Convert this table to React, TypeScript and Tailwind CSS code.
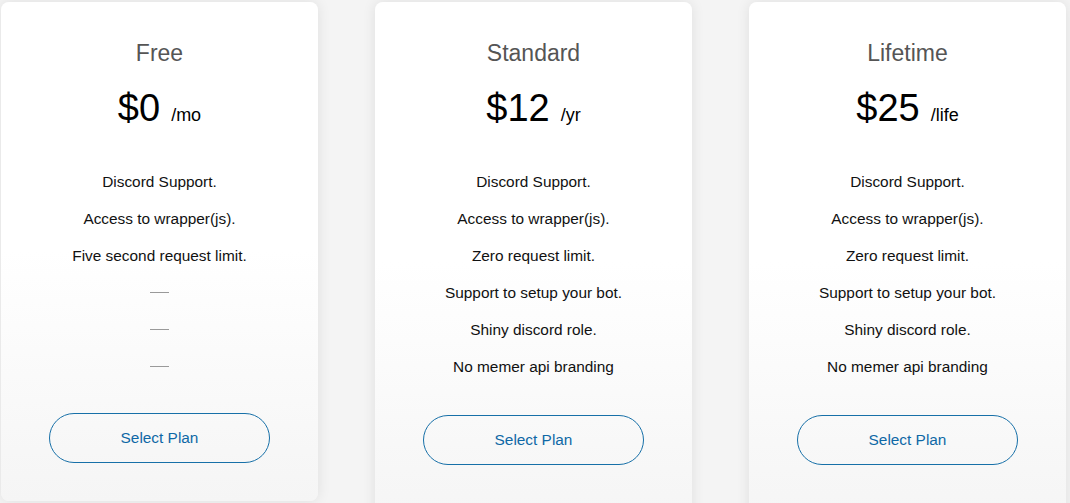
const plans = [
  {
    name: "Free",
    price: "$0",
    period: "/mo",
    features: ["Discord Support.", "Access to wrapper(js).", "Five second request limit.", null, null, null],
    buttonGap: "mt-[28px]",
    height: "h-[499px]",
  },
  {
    name: "Standard",
    price: "$12",
    period: "/yr",
    features: [
      "Discord Support.",
      "Access to wrapper(js).",
      "Zero request limit.",
      "Support to setup your bot.",
      "Shiny discord role.",
      "No memer api branding",
    ],
    buttonGap: "mt-[30px]",
    height: "h-[520px]",
  },
  {
    name: "Lifetime",
    price: "$25",
    period: "/life",
    features: [
      "Discord Support.",
      "Access to wrapper(js).",
      "Zero request limit.",
      "Support to setup your bot.",
      "Shiny discord role.",
      "No memer api branding",
    ],
    buttonGap: "mt-[30px]",
    height: "h-[520px]",
  },
];

const App = () => {
  return (
    <div
      className="w-[1070px] h-[503px] overflow-hidden bg-[#f4f4f4] flex items-start gap-[57px] pl-px pt-[2px]"
      style={{ fontFamily: '"Liberation Sans", Arial, sans-serif' }}
    >
      {plans.map((plan) => (
        <div
          key={plan.name}
          className={`${plan.height} w-[317px] shrink-0 rounded-lg bg-gradient-to-b from-white via-white to-[#f5f5f5] shadow-[0_0_14px_rgba(0,0,0,0.09)] flex flex-col items-center pt-[38px]`}
        >
          {/* Plan name */}
          <div className="text-[23px] leading-[26px] text-[#555]">{plan.name}</div>

          {/* Price */}
          <div className="mt-[22px] h-[40px] flex items-baseline text-black">
            <span className="text-[38px] leading-[40px]">{plan.price}</span>
            <span className="text-[18px] ml-[11px]">{plan.period}</span>
          </div>

          {/* Features */}
          <div className="mt-[35px] flex flex-col items-center">
            {plan.features.map((f, i) => (
              <div key={i} className="h-[37px] flex items-center justify-center text-[15.4px] text-[#111]">
                {f ? f : <div className="w-[19px] h-px bg-[#9a9a9a]" />}
              </div>
            ))}
          </div>

          <button
            className={`${plan.buttonGap} w-[221px] h-[50px] rounded-full border border-[#1770a8] text-[#0f68a6] text-[15.4px] bg-transparent`}
          >
            Select Plan
          </button>
        </div>
      ))}
    </div>
  );
};

export default App;
